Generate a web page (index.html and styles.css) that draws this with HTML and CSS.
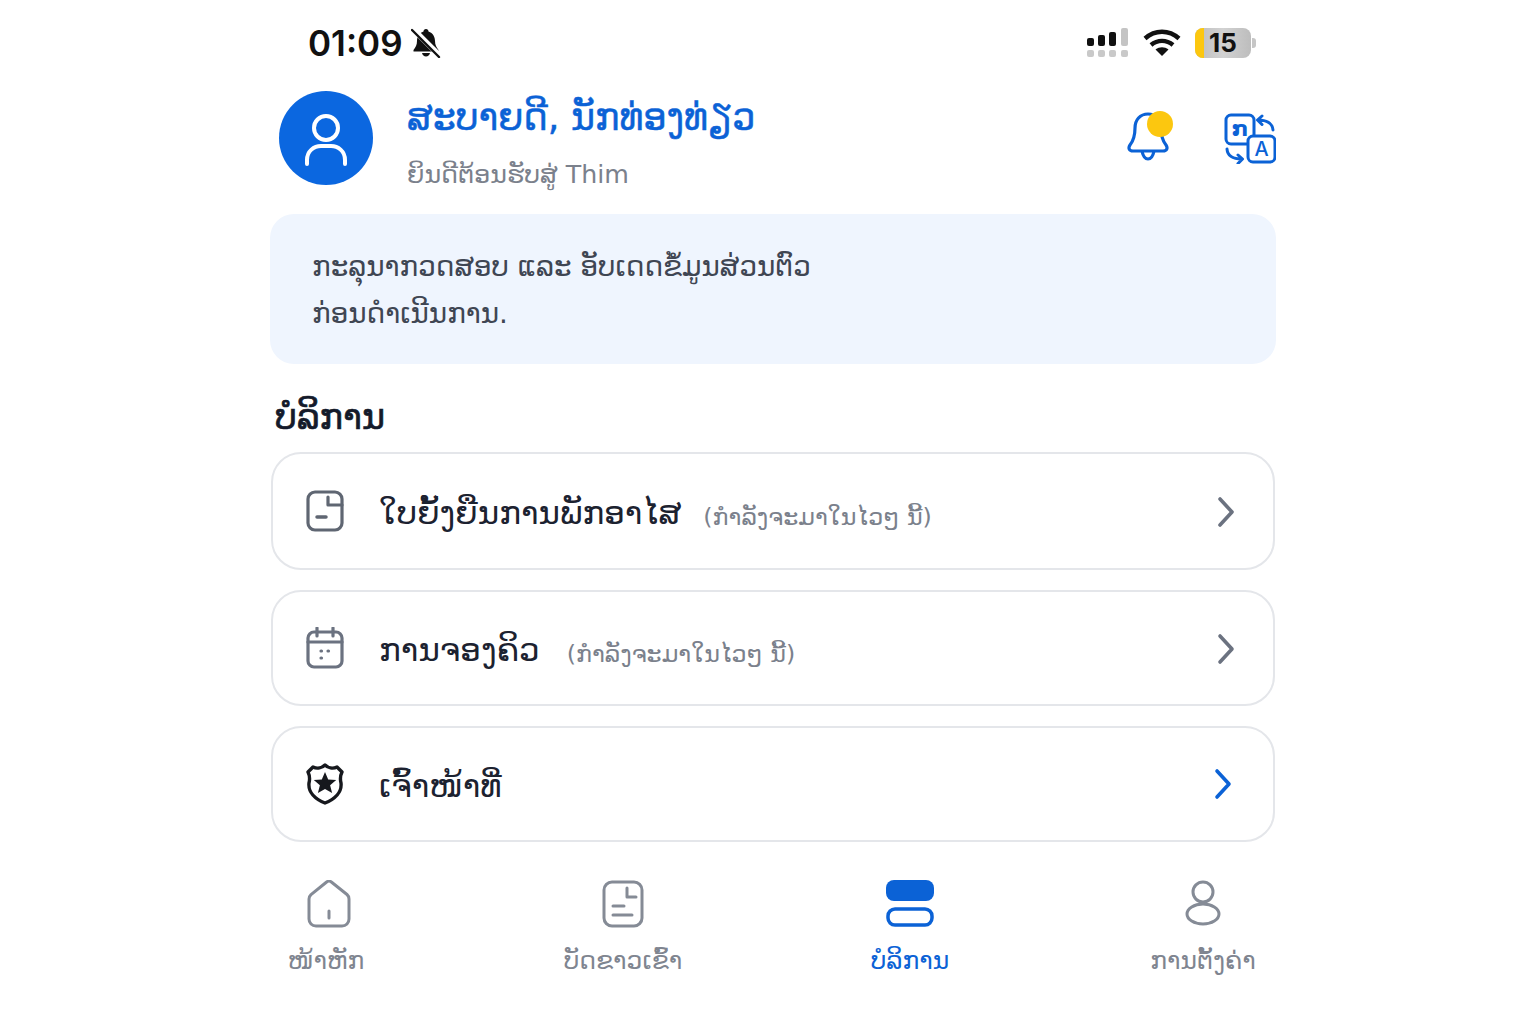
FILE: index.html
```html
<!DOCTYPE html>
<html lang="lo">

<head>
    <meta charset="UTF-8">
    <meta name="viewport" content="width=device-width, initial-scale=1.0">
    <title>Thim</title>
    <link rel="stylesheet" href="styles.css">
</head>

<body>
    <div class="screen">
        <div class="status">
            <div class="status-left">
                <span class="time">01:09</span>
                <svg class="silent" viewBox="0 0 30 30" width="30" height="30">
                    <path d="M15 1c-1.500 0-2.500 1-2.500 2.500C8 5 6 9 6 13c0 4-1.500 6.500-3.500 9v1.500h25V22c-2-2.500-3.500-5-3.500-9 0-4-2-8-6.500-9.500C17.500 2 16.500 1 15 1z" fill="#111"/>
                    <path d="M11 25h8c-.5 2-2 3.500-4 3.500s-3.500-1.500-4-3.500z" fill="#111"/>
                    <path d="M2 1l27 27" stroke="#fff" stroke-width="5.500"/>
                    <path d="M1 2l27 27" stroke="#111" stroke-width="2.400" stroke-linecap="round"/>
                </svg>
            </div>
            <div class="status-right">
                <svg class="signal" viewBox="0 0 42 32" width="42" height="32">
                    <rect x="0" y="11" width="7" height="8" rx="2" fill="#111"/>
                    <rect x="11" y="8" width="7" height="11" rx="2" fill="#111"/>
                    <rect x="22" y="5" width="7" height="14" rx="2" fill="#111"/>
                    <rect x="34" y="1" width="7" height="18" rx="2" fill="#c4c4c4"/>
                    <rect x="0" y="23" width="7" height="7" rx="2" fill="#c9c9c9"/>
                    <rect x="11" y="23" width="7" height="7" rx="2" fill="#c9c9c9"/>
                    <rect x="22" y="23" width="7" height="7" rx="2" fill="#c9c9c9"/>
                    <rect x="34" y="23" width="7" height="7" rx="2" fill="#c9c9c9"/>
                </svg>
                <svg class="wifi" viewBox="0 0 38 30" width="38" height="30">
                    <path d="M2 10.500c10-9 24-9 34 0M8 17c6.500-5.500 15.500-5.500 22 0" fill="none" stroke="#111" stroke-width="4.400"/>
                    <path d="M19 28l-6.500-6.500c4-3 9-3 13 0z" fill="#111"/>
                </svg>
                <div class="battery"><span class="battery-level"></span><span class="battery-num">15</span></div>
                <span class="battery-cap"></span>
            </div>
        </div>

        <div class="header">
            <div class="avatar">
                <svg viewBox="0 0 94 94" width="94" height="94" fill="none" stroke="#fff" stroke-width="4" stroke-linecap="round">
                    <circle cx="47" cy="37" r="12"/>
                    <path d="M28 73v-4c0-9 7-14 14-14h10c7 0 14 5 14 14v4"/>
                </svg>
            </div>
            <div class="greeting">
                <div class="hello">ສະບາຍດີ, ນັກທ່ອງທ່ຽວ</div>
                <div class="welcome">ຍິນດີຕ້ອນຮັບສູ່ Thim</div>
            </div>
            <div class="header-icons">
                <svg class="bell" viewBox="0 0 50 54" width="50" height="54" fill="none" stroke="#0b62d6" stroke-width="3.200" stroke-linejoin="round">
                    <path d="M21 3C13 3 8 9 8 17c0 8-1 12-5 17-2 3-1 6 3 6h30c4 0 5-3 3-6-4-5-5-9-5-17C34 9 29 3 21 3z"/>
                    <path d="M15 40c1 5 3 8 6 8s5-3 6-8"/>
                    <circle cx="33" cy="13" r="13" fill="#fcc70f" stroke="none"/>
                </svg>
                <svg class="translate" viewBox="0 0 52 52" width="52" height="52" fill="none" stroke="#0b62d6" stroke-width="3" stroke-linecap="round" stroke-linejoin="round">
                    <rect x="2" y="3" width="28" height="29" rx="5"/>
                    <rect x="24" y="24" width="27" height="26" rx="5" fill="#fff"/>
                    <path d="M38 4l-4.500 4 4.500 4.500M34 8c8 0 14.500 3 15 10"/>
                    <path d="M14 43l4.500 4-4.500 4.500M18 47C9 47 3.500 44 3 37"/>
                    <text class="translate-lo" x="16" y="24">ກ</text>
                    <text class="translate-a" x="37.500" y="44">A</text>
                </svg>
            </div>
        </div>

        <div class="notice">
            ກະລຸນາກວດສອບ ແລະ ອັບເດດຂໍ້ມູນສ່ວນຕົວ<br>
            ກ່ອນດຳເນີນການ.
        </div>

        <h2 class="section-title">ບໍລິການ</h2>

        <div class="cards">
            <div class="card card-first">
                <svg class="card-icon" viewBox="0 0 38 42" width="38" height="42" fill="none" stroke="#5f6672" stroke-width="3.200" stroke-linecap="round" stroke-linejoin="round">
                    <rect x="2" y="2" width="34" height="38" rx="7"/>
                    <path d="M22 7v8h14"/>
                    <path d="M11 27h9" stroke-width="3.500"/>
                </svg>
                <span class="card-title">ໃບຍັ້ງຍືນການພັກອາໄສ</span>
                <span class="card-note">(ກຳລັງຈະມາໃນໄວໆ ນີ້)</span>
                <svg class="chev" viewBox="0 0 20 32" width="20" height="32" fill="none" stroke="#6b7280" stroke-width="3.600" stroke-linecap="round" stroke-linejoin="round"><path d="M4 3l12 13L4 29"/></svg>
            </div>
            <div class="card">
                <svg class="card-icon" viewBox="0 0 38 42" width="38" height="42" fill="none" stroke="#6b7280" stroke-width="3.200" stroke-linecap="round" stroke-linejoin="round">
                    <rect x="2" y="5" width="34" height="35" rx="6"/>
                    <path d="M2 15h34M11 1v8M27 1v8"/>
                    <path d="M15 24h.5M22 24h.5M15 31h.5"/>
                </svg>
                <span class="card-title">ການຈອງຄິວ</span>
                <span class="card-note">(ກຳລັງຈະມາໃນໄວໆ ນີ້)</span>
                <svg class="chev" viewBox="0 0 20 32" width="20" height="32" fill="none" stroke="#6b7280" stroke-width="3.600" stroke-linecap="round" stroke-linejoin="round"><path d="M4 3l12 13L4 29"/></svg>
            </div>
            <div class="card">
                <svg class="card-icon" viewBox="0 0 38 42" width="38" height="42">
                    <path d="M19 2c3 3 8 4 12 2l5 5c-2 4-2 7-1 11 1 9-6 16-16 20C9 36 2 29 3 20c1-4 1-7-1-11l5-5c4 2 9 1 12-2z" fill="none" stroke="#16181d" stroke-width="3.400" stroke-linejoin="round"/>
                    <path d="M19 9l3.200 7.500 8 .6-6.100 5.200 2 7.800L19 26l-7.100 4.100 2-7.800-6.100-5.200 8-.6z" fill="#16181d"/>
                </svg>
                <span class="card-title">ເຈົ້າໜ້າທີ່</span>
                <svg class="chev chev-active" viewBox="0 0 20 32" width="20" height="32" fill="none" stroke="#0b62d6" stroke-width="3.600" stroke-linecap="round" stroke-linejoin="round"><path d="M4 3l12 13L4 29"/></svg>
            </div>
        </div>

        <div class="tabs">
            <div class="tab tab-home">
                <svg viewBox="0 0 44 48" width="44" height="48" fill="none" stroke="#858b96" stroke-width="3" stroke-linecap="round" stroke-linejoin="round">
                    <path d="M2 19c0-2 .6-3 2-4.300L19 2.500c2.500-2 3.500-2 6 0l15 12c1.500 1.300 2 2.500 2 4.500v20c0 4-3 7-7 7H9c-4 0-7-3-7-7z"/>
                    <path d="M22 31v7"/>
                </svg>
                <span>ໜ້າຫັກ</span>
            </div>
            <div class="tab tab-card">
                <svg viewBox="0 0 42 48" width="42" height="48" fill="none" stroke="#858b96" stroke-width="3" stroke-linecap="round" stroke-linejoin="round">
                    <rect x="2" y="2" width="38" height="44" rx="8"/>
                    <path d="M25 8v9h9M11 26h11M11 35h19"/>
                </svg>
                <span>ບັດຂາວເຂົ້າ</span>
            </div>
            <div class="tab tab-active tab-service">
                <svg viewBox="0 0 48 48" width="48" height="48">
                    <rect x="0" y="0" width="48" height="21" rx="8" fill="#0b62d6"/>
                    <rect x="2" y="29" width="44" height="16" rx="7" fill="none" stroke="#0b62d6" stroke-width="3.500"/>
                </svg>
                <span>ບໍລິການ</span>
            </div>
            <div class="tab tab-settings">
                <svg viewBox="0 0 36 48" width="36" height="48" fill="none" stroke="#858b96" stroke-width="3">
                    <circle cx="18" cy="12" r="10"/>
                    <ellipse cx="18" cy="34" rx="16" ry="10"/>
                </svg>
                <span>ການຕັ້ງຄ່າ</span>
            </div>
        </div>
    </div>
</body>

</html>
```

FILE: styles.css
```css
* {
    margin: 0;
    padding: 0;
    box-sizing: border-box;
}

html {
    background: #fff;
}

body {
    font-family: "DejaVu Sans", "Noto Sans", sans-serif;
    color: #1c2230;
}

.screen {
    width: 1006px;
    margin-left: 270px;
    height: 1024px;
    overflow: hidden;
}

/* status bar */
.status {
    display: flex;
    justify-content: space-between;
    align-items: center;
    height: 86px;
    padding: 0 20px 0 38px;
}

.status-left,
.status-right {
    display: flex;
    align-items: center;
}

.time {
    font-family: Inter, "Liberation Sans", sans-serif;
    font-size: 35px;
    font-weight: 600;
    color: #111;
}

.silent {
    margin-left: 8px;
}

.wifi {
    margin-left: 14px;
}

.battery {
    position: relative;
    width: 56px;
    height: 30px;
    margin-left: 14px;
    border-radius: 8px;
    background: linear-gradient(90deg, #bdbdbd, #d2d2d2 50%, #bdbdbd);
    overflow: hidden;
    text-align: center;
}

.battery-level {
    position: absolute;
    left: 0;
    top: 0;
    bottom: 0;
    width: 9px;
    background: #fcc70f;
}

.battery-num {
    position: relative;
    font-family: Inter, "Liberation Sans", sans-serif;
    font-size: 26px;
    font-weight: 700;
    line-height: 30px;
    color: #111;
}

.battery-cap {
    width: 4px;
    height: 10px;
    margin-left: 1px;
    border-radius: 0 3px 3px 0;
    background: #c6c6c6;
}

/* greeting */
.header {
    display: flex;
    align-items: center;
    height: 104px;
    padding-left: 9px;
}

.avatar {
    width: 94px;
    height: 94px;
    border-radius: 50%;
    background: #0b67e0;
    flex-shrink: 0;
}

.avatar svg {
    display: block;
}

.greeting {
    margin-left: 34px;
    padding-top: 11px;
    flex: 1;
}

.hello {
    font-size: 36.500px;
    line-height: 52px;
    color: #0b62d6;
    -webkit-text-stroke: 0.5px #0b62d6;
}

.welcome {
    font-size: 25.300px;
    line-height: 40px;
    color: #7b818c;
    margin-top: 11px;
}

.header-icons {
    display: flex;
    align-items: center;
    gap: 47px;
}

.translate-lo {
    font-size: 21px;
    font-weight: 700;
    fill: #0b62d6;
    stroke: none;
    text-anchor: middle;
}

.translate-a {
    font-family: Inter, "Liberation Sans", sans-serif;
    font-size: 20px;
    font-weight: 500;
    fill: #0b62d6;
    stroke: none;
    text-anchor: middle;
}

/* notice */
.notice {
    height: 150px;
    margin-top: 24px;
    padding: 29px 40px 0 42px;
    border-radius: 24px;
    background: #eff5fe;
    font-size: 27.800px;
    line-height: 47px;
    color: #3f4653;
}

.section-title {
    margin: 28px 0 0 5px;
    font-size: 35px;
    line-height: 50px;
    font-weight: 400;
    color: #141a2a;
    -webkit-text-stroke: 0.7px #141a2a;
}

/* service cards */
.cards {
    display: flex;
    flex-direction: column;
    gap: 20px;
    margin: 10px 1px 0;
}

.card {
    display: flex;
    align-items: center;
    height: 116px;
    padding: 0 37px 0 33px;
    border: 2px solid #e4e6ea;
    border-radius: 30px;
    background: #fff;
}

.card-first {
    height: 118px;
}

.card-icon {
    flex-shrink: 0;
}

.card-title {
    margin-left: 35px;
    margin-top: 4px;
    font-size: 32.600px;
    color: #1c2230;
}

.card-note {
    margin-left: 27px;
    margin-top: 12px;
    font-size: 23.800px;
    color: #7b818c;
}

.card-first .card-note {
    margin-left: 22px;
}

.chev {
    margin-left: auto;
    margin-top: 2px;
}

.chev-active {
    margin-right: 3px;
    margin-top: 0;
}

/* bottom tabs */
.tabs {
    display: flex;
    margin-top: 38px;
}

.tab {
    display: flex;
    flex-direction: column;
    align-items: center;
    font-size: 25px;
    line-height: 40px;
    color: #7f8590;
}

.tab span {
    margin-top: 13px;
    white-space: nowrap;
}

.tab-home {
    width: 112px;
}

.tab-home svg {
    margin-left: 6px;
}

.tab-card {
    width: 170px;
    margin-left: 156px;
}

.tab-service {
    width: 100px;
    margin-left: 152px;
}

.tab-settings {
    width: 120px;
    margin-left: 183px;
}

.tab-active {
    color: #0b62d6;
}
```
